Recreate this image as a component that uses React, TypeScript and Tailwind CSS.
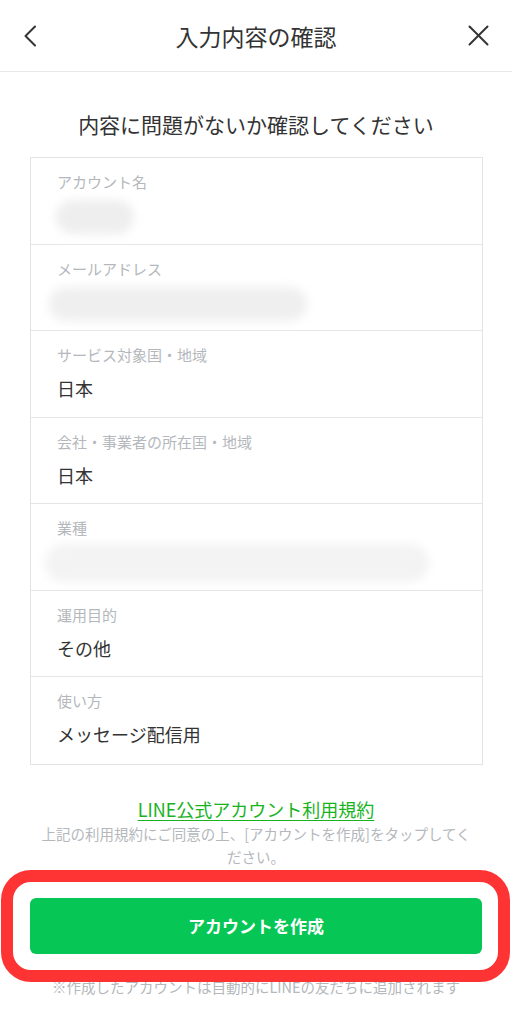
import React from "react";

type Row = { label: string; value?: string; blob?: { ml: number; w: number; h: number; c: string } };

const rows: Row[] = [
  { label: "アカウント名", blob: { ml: -1, w: 78, h: 34, c: "#eeeeee" } },
  { label: "メールアドレス", blob: { ml: -8, w: 258, h: 34, c: "#efefef" } },
  { label: "サービス対象国・地域", value: "日本" },
  { label: "会社・事業者の所在国・地域", value: "日本" },
  { label: "業種", blob: { ml: -12, w: 384, h: 38, c: "#f3f3f3" } },
  { label: "運用目的", value: "その他" },
  { label: "使い方", value: "メッセージ配信用" },
];

export default function App() {
  return (
    <div className="relative w-[512px] h-[1024px] bg-white overflow-hidden font-['Noto_Sans_CJK_JP','Noto_Sans',sans-serif] text-[#333333]">
      {/* Header */}
      <div className="h-[72px] border-b border-[#e8e8e8] grid grid-cols-[1fr_auto_1fr] items-center px-[23px]">
        <div className="flex items-center">
          <svg width="14" height="22" viewBox="0 0 14 22" fill="none">
            <polyline points="12,1.5 2.5,11 12,20.5" stroke="#333" strokeWidth="2" strokeLinecap="round" strokeLinejoin="round" />
          </svg>
        </div>
        <div className="text-[23px] leading-[30px] text-[#333]">入力内容の確認</div>
        <div className="flex items-center justify-end">
          <svg width="21" height="21" viewBox="0 0 21 21" fill="none">
            <line x1="1.5" y1="1.5" x2="19.5" y2="19.5" stroke="#333" strokeWidth="2" strokeLinecap="round" />
            <line x1="19.5" y1="1.5" x2="1.5" y2="19.5" stroke="#333" strokeWidth="2" strokeLinecap="round" />
          </svg>
        </div>
      </div>

      {/* Subtitle */}
      <div className="mt-[37px] text-center text-[21px] leading-[30px] text-[#333]">
        内容に問題がないか確認してください
      </div>

      {/* Card */}
      <div className="mt-[18px] mx-[30px] w-[453px] border border-[#e3e3e3]">
        {rows.map((r, i) => (
          <div
            key={i}
            className={
              "h-[86.5px] px-[26px] pt-[14px] " + (i < rows.length - 1 ? "border-b border-[#e6e6e6]" : "")
            }
          >
            <div className="text-[15px] leading-[20px] text-[#b4b8bc]">{r.label}</div>
            <div className="mt-[10px] h-[26px] flex items-center">
              {r.value ? (
                <span className="text-[18px] leading-[26px] text-[#333]">{r.value}</span>
              ) : r.blob ? (
                <div
                  className="rounded-full blur-[5px]"
                  style={{ marginLeft: r.blob.ml, width: r.blob.w, height: r.blob.h, marginTop: 4, backgroundColor: r.blob.c }}
                />
              ) : null}
            </div>
          </div>
        ))}
      </div>

      {/* Terms link */}
      <div className="mt-[31px] text-center text-[18px] leading-[26px]">
        <span className="text-[#19b31e] underline underline-offset-[3px] decoration-[1px]">LINE公式アカウント利用規約</span>
      </div>
      <div className="px-[37px] text-center text-[14.5px] leading-[23px] text-[#b4b8bc]">
        上記の利用規約にご同意の上、[アカウントを作成]をタップしてください。
      </div>

      {/* Button */}
      <div className="mt-[30px] mx-[30px]">
        <div className="h-[56px] w-[452px] rounded-[6px] bg-[#06c755] flex items-center justify-center text-white text-[17px] font-bold">
          アカウントを作成
        </div>
      </div>

      <div className="mt-[22px] text-center text-[14.5px] leading-[22px] text-[#b4b8bc]">
        ※作成したアカウントは自動的にLINEの友だちに追加されます
      </div>

      {/* Red annotation box */}
      <div className="absolute left-[1px] top-[870px] w-[509px] h-[112px] border-[12px] border-[#fe3434] rounded-[30px] pointer-events-none" />
    </div>
  );
}
